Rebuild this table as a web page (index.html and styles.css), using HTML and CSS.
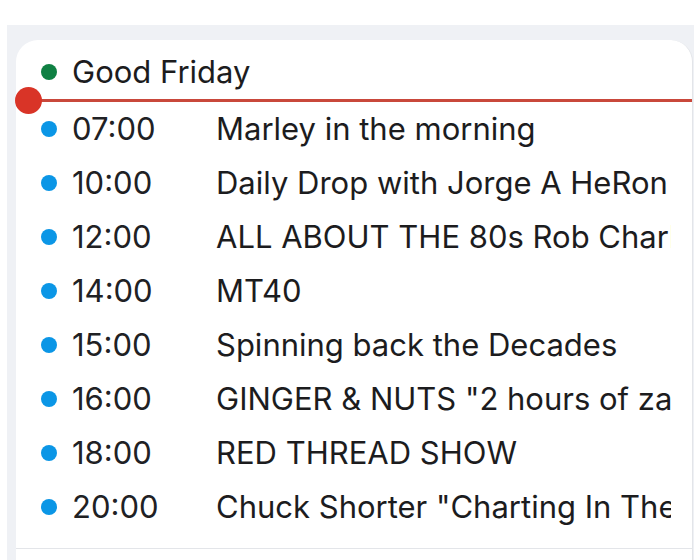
FILE: index.html
```html
<!DOCTYPE html>
<html lang="en">
<head>
<meta charset="utf-8">
<title>Schedule</title>
<link rel="stylesheet" href="styles.css">
</head>
<body>
<div class="page">
  <section class="card">
    <div class="row head">
      <span class="dot green"></span>
      <span class="day">Good Friday</span>
    </div>
    <div class="now"><span class="now-knob"></span></div>
    <div class="row"><span class="dot blue"></span><span class="time">07:00</span><span class="title">Marley in the morning</span></div>
    <div class="row"><span class="dot blue"></span><span class="time">10:00</span><span class="title">Daily Drop with Jorge A HeRon</span></div>
    <div class="row"><span class="dot blue"></span><span class="time">12:00</span><span class="title">ALL ABOUT THE 80s Rob Charles</span></div>
    <div class="row"><span class="dot blue"></span><span class="time">14:00</span><span class="title">MT40</span></div>
    <div class="row"><span class="dot blue"></span><span class="time">15:00</span><span class="title">Spinning back the Decades</span></div>
    <div class="row"><span class="dot blue"></span><span class="time">16:00</span><span class="title">GINGER &amp; NUTS "2 hours of zany fun"</span></div>
    <div class="row"><span class="dot blue"></span><span class="time">18:00</span><span class="title">RED THREAD SHOW</span></div>
    <div class="row"><span class="dot blue"></span><span class="time">20:00</span><span class="title">Chuck Shorter "Charting In The 80s"</span></div>
  </section>
  <section class="card next"></section>
</div>
</body>
</html>
```
FILE: styles.css
```css
html, body {
  margin: 0;
  padding: 0;
  background: #ffffff;
  height: 100%;
  overflow: hidden;
}
body {
  font-family: Inter, "Noto Sans", sans-serif;
  color: #1f1f1f;
}
.page {
  margin: 25px 0 0 7px;
  padding: 15px 0 0 9px;
  background: #eff1f5;
  height: 520px;
  overflow: hidden;
}
.card {
  width: 676px;
  background: #ffffff;
  border-radius: 22px 22px 0 0;
  border-right: 1px solid #e3e5e9;
  border-bottom: 1px solid #e3e5e9;
  padding: 5px 0 14px;
}
.card.next {
  border-radius: 0;
  border-bottom: none;
  height: 20px;
  padding: 0;
}
.row {
  display: flex;
  align-items: center;
  height: 54px;
  padding-left: 25px;
  font-size: 31px;
  line-height: 1.3;
  white-space: nowrap;
}
.dot {
  width: 16px;
  height: 16px;
  border-radius: 50%;
  flex: none;
  margin-right: 15px;
}
.dot.green { background: #0f8043; }
.dot.blue { background: #0b96e6; }
.day { color: #1c1c1e; }
.time {
  width: 144px;
  flex: none;
  color: #202124;
}
.title {
  width: 455px;
  overflow: hidden;
  color: #1c1c1e;
}
.now {
  position: relative;
  height: 3px;
  margin-left: 12px;
  background: #c9483b;
}
.now-knob {
  position: absolute;
  left: -13px;
  top: -12px;
  width: 27px;
  height: 27px;
  border-radius: 50%;
  background: #d93427;
}
```
